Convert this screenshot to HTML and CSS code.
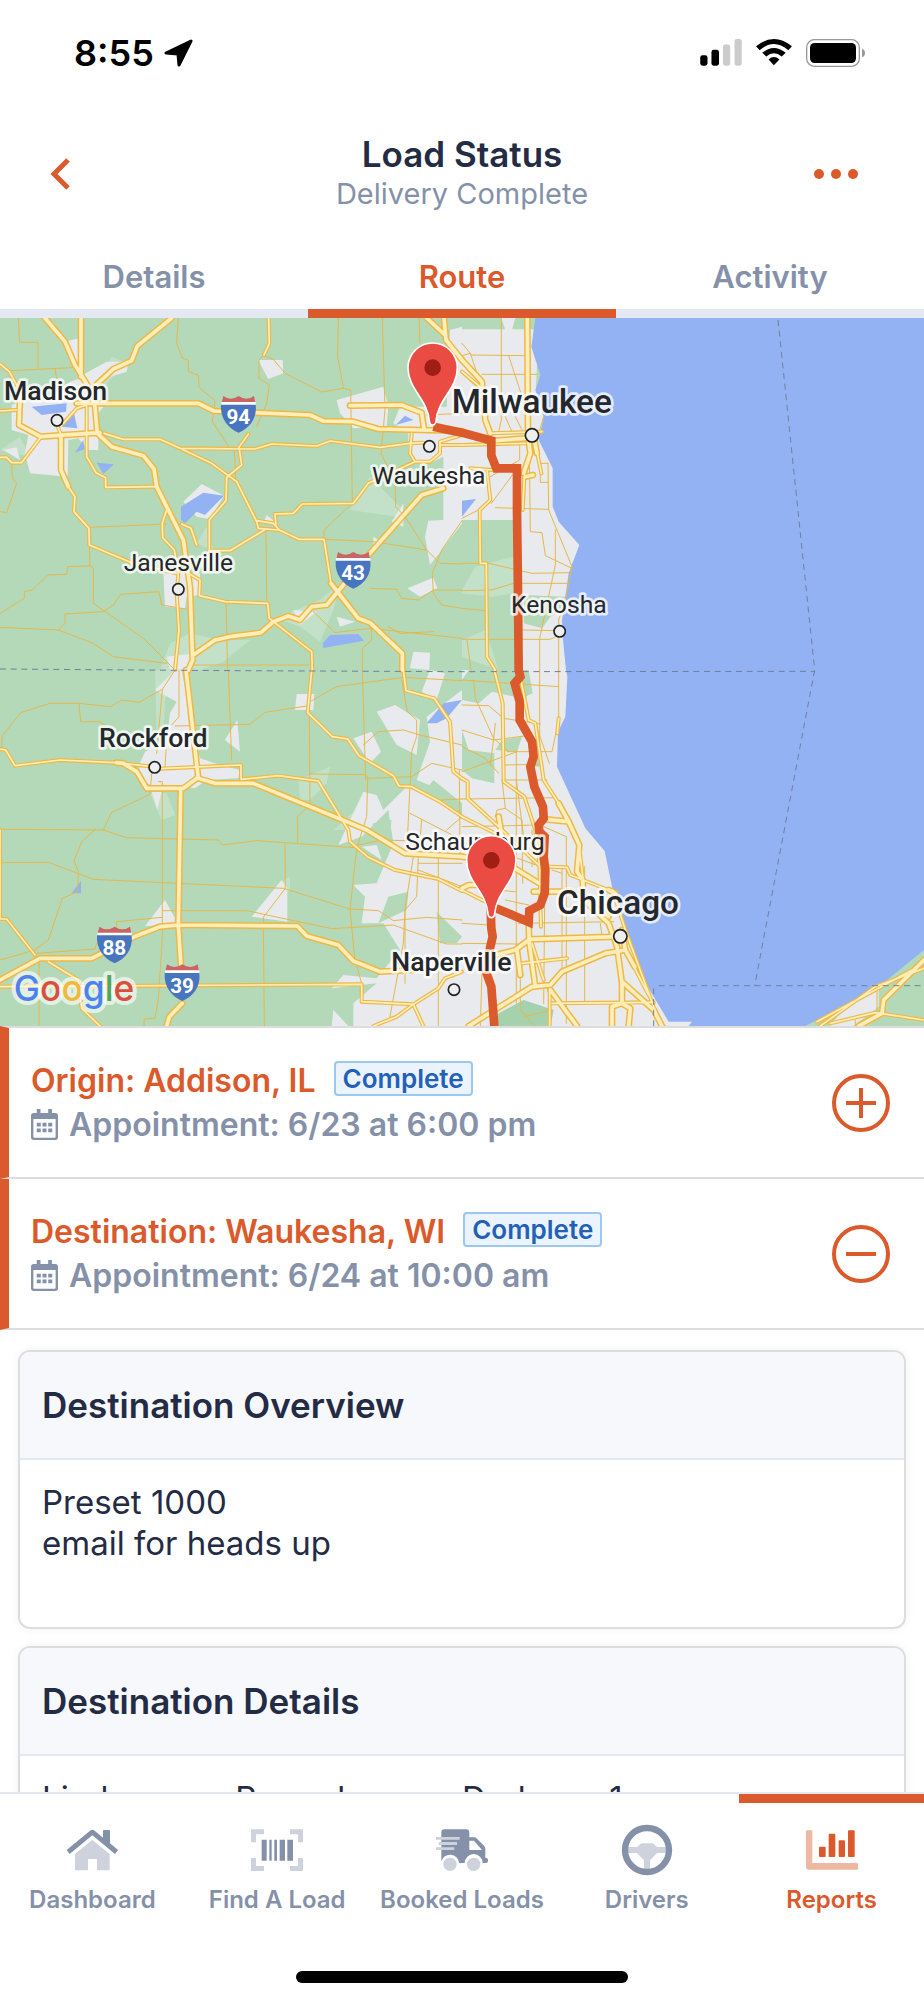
FILE: index.html
```html
<!DOCTYPE html>
<html lang="en">

<head>
    <meta charset="UTF-8">
    <meta name="viewport" content="width=device-width, initial-scale=1.0">
    <title>Load Status</title>
    <link rel="stylesheet" href="styles.css">
</head>

<body>
    <div class="app">
        <div class="status-bar">
            <div class="status-left">
                <span class="time">8:55</span>
                <svg class="arrow" viewBox="0 0 29 28" width="29" height="28"><path d="M27 2 L2 14 L14 15 L15 26Z" fill="#000" stroke="#000" stroke-width="3" stroke-linejoin="round"/></svg>
            </div>
            <div class="status-right">
                <svg viewBox="0 0 126 82" width="42" height="27">
                    <rect x="0" y="49" width="22" height="32" rx="7"/>
                    <rect x="34" y="33" width="23" height="48" rx="7"/>
                    <rect x="69" y="17" width="22" height="64" rx="7" fill="#ccc"/>
                    <rect x="104" y="0" width="22" height="81" rx="7" fill="#ccc"/>
                </svg>
                <svg viewBox="0 0 109 82" width="36" height="27">
                    <path d="M0 22 Q54 -22 109 22 L98 34 Q54 -4 11 34Z"/>
                    <path d="M19 42 Q54 13 90 42 L78 53 Q54 34 31 53Z"/>
                    <path d="M38 62 Q54 48 71 62 L54 80Z"/>
                </svg>
                <svg viewBox="0 0 177 84" width="59" height="28">
                    <rect x="2" y="2" width="158" height="80" rx="23" fill="none" stroke="#999" stroke-width="4"/>
                    <rect x="12" y="12" width="138" height="60" rx="14"/>
                    <path d="M168 29 Q177 32 177 42 Q177 52 168 55Z" fill="#999"/>
                </svg>
            </div>
        </div>

        <header class="header">
            <button class="icon-btn" aria-label="Back">
                <svg viewBox="0 0 20 34" width="20" height="34"><path d="M18 3 L4 17 L18 31" fill="none" stroke="#db5a2b" stroke-width="5"/></svg>
            </button>
            <div class="titles">
                <h1>Load Status</h1>
                <p>Delivery Complete</p>
            </div>
            <button class="icon-btn" aria-label="More">
                <svg viewBox="0 0 45 12" width="45" height="12" fill="#db5a2b"><circle cx="5" cy="6" r="5"/><circle cx="22" cy="6" r="5"/><circle cx="39" cy="6" r="5"/></svg>
            </button>
        </header>

        <nav class="tabs">
            <a href="#details">Details</a>
            <a href="#route" class="active">Route</a>
            <a href="#activity">Activity</a>
        </nav>

        <main class="content">
            <svg class="map" viewBox="0 24 2772 2124" role="img" aria-label="Route map">
                <defs>
                    <g id="roads">
                        <path d="M0 162 28 185 50 225M0 303 50 300M0 442 20 442 35 458 65 458 120 385M312 370 370 388 480 388 540 415 765 417 815 402 950 408 990 393 1140 412 1230 400 1270 398M540 415 635 460 710 515 770 635 775 655 835 660M770 632 820 640 838 660 897 688 972 688 993 820M628 722 690 722 793 660M628 722 628 630 678 572 680 502 725 465 717 412 745 372M828 650 825 612 880 610 907 582 1060 580 1105 520 1245 455M260 290 260 440 288 488 317 503 317 532 470 530M205 530 225 560 222 605 267 655 268 705 395 758 530 790M500 600 487 640 488 683 523 720 535 790 530 850 537 960 525 1080M545 642 573 655 590 705M565 790 600 810 598 857 675 875 803 880 808 925 935 1025 937 1080M806 24 808 100 792 135M1235 370 1230 430 1245 455 1290 455 1320 430 1320 395 1386 375M1320 405 1386 405M170 340 185 380M190 340 230 295 260 285"/>
                        <path transform="translate(1386 0)" d="M0 185 60 235M80 370 240 365M0 405 190 400M75 480 85 570 53 600 55 760 73 760 75 1040 100 1080M90 480 25 475M220 400 238 490M182 600 187 500"/>
                        <path transform="translate(0 1080)" d="M0 237 17 240 45 287 180 270 345 278 460 290M480 296 723 285 723 328 835 317 955 333 1045 480 1050 515 1105 562 1185 600 1315 627 1386 663M935 0 923 128 997 200 1043 207 1077 257 1180 317 1197 348 1235 350 1320 395 1386 440M1210 0 1218 62 1303 85 1350 155 1360 305 1386 325M0 480 0 747 20 747 105 855M145 875 235 930 245 1015 300 1068M0 950 1085 943 1085 995 1240 1003 1315 955 1335 925 1386 905M1120 1068 1190 1040 1240 1003 1270 1068"/>
                        <path transform="translate(1386 1080)" d="M97 0 122 100 125 335 187 380 220 480 232 580 237 770M175 20 200 150 220 160 245 330 290 400M0 325 17 335 17 385 110 470 235 590M0 440 120 500M180 880 315 865M270 1000 575 997M262 590 315 592 325 615 440 660M490 840 560 975M0 660 90 705M1075 1068 1240 950 1386 895M1065 1055 1350 900M1105 1060 1240 1028 1386 1050M290 145 286 190M263 960 263 1068M210 820 245 930M350 520 365 640M452 660 490 780 575 1010 600 1068"/>
                    </g>
                    <g id="highways">
                        <path d="M135 24 195 95 225 165 262 225M243 24 243 200M515 24 412 108 395 152 340 177 285 228M62 225 57 345 122 380 300 368M230 280 595 280 642 303 930 315 970 333 1060 335 1135 357 1386 363M1050 287 1205 285 1265 308 1272 357M270 240 285 290 292 370 335 410 430 437 462 477 470 530 550 690 570 830 578 1050 565 1080M183 380 183 480 205 530M580 1035 645 990 690 980 783 968 820 935 865 918 900 930 935 890 980 885 1030 825 1110 730 1265 555 1330 535M993 820 1075 925 1110 938 1207 1030 1207 1080M1280 24 1335 75M1332 24 1338 90 1386 150"/>
                        <path transform="translate(1386 0)" d="M196 24 198 380 205 430 185 490M0 150 60 215 70 330 85 370M100 392 190 385M190 500 213 495M218 395 225 430"/>
                        <path transform="translate(0 1080)" d="M558 0 595 325 645 340 760 340 1040 455 1100 480 1215 550 1386 560M350 278 370 280 410 305 440 355 550 355 595 322M542 365 535 765 543 890M547 1000 508 1040 500 1068M0 930 120 865 275 865 410 797 480 770 535 765 892 768 920 798 1015 825 1060 873 1140 905 1240 900"/>
                        <path transform="translate(1386 1080)" d="M290 400 320 455 352 525 345 605 362 630 365 690 440 760 465 830 480 940 480 1000 505 1015 500 1068M480 1000 450 1010 450 1068M480 935 575 1020 600 1068M252 448 320 455M200 770 202 820 220 950M200 808 465 800M20 1068 210 950 265 945 300 905 430 850 490 840 480 780M265 960 345 1068M490 840 518 890M110 440 120 500M150 590 240 645M0 560 60 570M0 655 20 645 60 645M215 665 330 665 360 685 440 740M440 660 460 670M100 855 160 840 200 810M165 840 175 915M1190 1068 1260 1030 1265 990 1386 870"/>
                    </g>
                    <g id="shield">
                        <path d="M670 258 Q692 274 716 258 Q740 274 762 258 L766 278 H665Z" fill="#cb6463"/>
                        <path d="M664 276 H767 V286 H664Z" fill="#fff"/>
                        <path d="M663 284 H767 C772 325 748 355 716 368 C684 355 660 325 663 284Z" fill="#4775c0"/>
                    </g>
                    <g id="pin">
                        <path d="M0 172 C-6 172 -9 168 -10 160 C-16 92 -74 66 -74 0 A74 74 0 0 1 74 0 C74 66 16 92 10 160 C9 168 6 172 0 172Z" fill="#ea4b42" stroke="#fff" stroke-width="5"/>
                        <circle r="25" fill="#9f1e15"/>
                    </g>
                </defs>

                <rect y="24" width="2772" height="2124" fill="#b3d9b9"/>

                <!-- light green -->
                <g fill="#c3e1c9">
                    <path d="M1050 600 1110 500 1200 590 1190 620ZM830 925 960 870 1020 820 1000 900 960 995 900 950ZM480 1080 510 1000 570 970 660 990 750 990 670 1055 600 1080ZM300 240 335 140 380 160ZM0 420 60 380 90 440ZM590 700 620 650 640 720Z"/>
                    <path transform="translate(1386 0)" d="M0 840 40 770 155 740 155 850 90 860 0 850ZM0 990 70 960 110 1080 0 1040Z"/>
                    <path transform="translate(0 1080)" d="M465 0 540 0 495 90 490 200 470 180ZM895 330 990 290 980 340 930 390 900 390ZM450 370 500 370 525 435 485 450ZM1000 480 1090 400 1090 480ZM760 740 840 640 870 620 870 660Z"/>
                </g>

                <!-- urban -->
                <g fill="#e8eaed">
                    <path d="M190 95 238 85 240 200 265 185 320 155 385 155 380 185 330 200 300 225 300 280 310 290 295 310 295 420 265 420 235 385 205 390 203 500 90 490 75 430 85 375 35 360 35 285 60 275 130 270 210 215 240 205ZM10 420 50 412 60 450ZM775 150 848 150 850 190 805 207 790 180ZM550 575 605 522 672 557 630 628 590 620ZM490 790 600 790 600 855 560 860 555 895 495 890ZM1010 270 1150 230 1165 290 1160 350 1060 355 1020 310ZM1350 60 1386 50 1386 640 1330 715 1290 765 1275 680 1285 632 1330 630 1330 440 1300 455 1240 455 1225 420 1225 370 1180 340 1200 290 1340 290ZM1222 835 1300 803 1312 835 1260 860ZM1240 1025 1290 1028 1288 1080 1230 1075ZM880 900 950 905 900 945ZM1010 920 1065 935 1020 950ZM500 1040 590 1030 560 1080 510 1080ZM1175 635 1210 580 1210 650ZM1120 680 1150 700 1120 710ZM790 640 800 615 830 640Z"/>
                    <path transform="translate(1386 0)" d="M0 58 400 58 400 1080 183 1080 160 630 0 630ZM118 24 160 24 150 60 130 60Z"/>
                    <path transform="translate(0 1080)" d="M465 60 520 5 545 0 570 130 600 265 660 285 720 300 715 325 620 330 585 355 540 350 480 355 440 340 415 290 435 245 500 210 510 130 530 95ZM455 365 485 365 472 420ZM675 210 712 150 720 245ZM890 72 943 72 940 120 885 120ZM435 768 495 690 525 745 522 765ZM755 740 845 630 862 655 862 755ZM1130 125 1185 105 1260 150 1250 255 1190 225ZM1060 205 1115 185 1143 245 1110 280ZM1265 65 1290 0 1335 10 1310 90ZM1280 140 1386 60 1386 1068 1060 1068 1060 1000 1130 940 995 955 1030 915 1130 925 1200 840 1150 760 1085 760 1095 680 1060 645 1130 640 1180 520 1165 420 1085 500 1015 525 1090 365 1130 375 1150 420 1220 350 1270 375 1300 350 1250 330 1290 215ZM1000 1020 1045 1068 995 1068ZM1085 530 1130 525 1145 570Z"/>
                    <path transform="translate(1386 1080)" d="M0 0 400 0 700 1068 0 1068Z"/>
                </g>

                <!-- parks over the urban areas -->
                <g fill="#b3d9b9">
                    <path transform="translate(1386 0)" d="M225 160 236 195 222 235ZM185 855 310 860 300 900 265 920 240 955 185 940Z"/>
                    <path transform="translate(0 1080)" d="M1165 680 1225 665 1220 720 1135 760ZM1310 725 1386 800 1370 820 1320 820ZM1120 460 1175 450 1165 510 1100 520ZM1270 370 1300 330 1386 400 1386 440Z"/>
                    <path transform="translate(1386 1080)" d="M0 30 20 0 200 0 212 70 180 85 90 65 50 100 0 90ZM0 180 20 240 97 250 97 340 30 325 0 300ZM100 240 120 210 180 200 165 245ZM215 265 240 265 235 290 215 290Z"/>
                    <path transform="translate(1386 1080)" d="M90 1068 110 1030 185 990 275 1020 265 1068Z" fill="#a5d2ad"/>
                </g>

                <!-- water -->
                <g fill="#93b2f3">
                    <path d="M95 290 200 280 198 305 125 315ZM185 350 222 310 232 355ZM225 428 250 390 253 418ZM290 458 342 463 310 492ZM543 590 610 548 672 557 615 615 590 605 555 640 543 630ZM1187 345 1215 317 1240 330ZM968 1000 990 975 1075 972 1092 992 970 1014ZM1386 572 1428 567 1386 620Z"/>
                    <path transform="translate(0 1080)" d="M1280 160 1330 100 1386 90 1340 145 1310 160ZM215 670 243 632 243 670Z"/>
                    <path d="M1606 24 1594 110 1621 195 1606 240 1631 320 1616 390 1658 475 1658 590 1676 635 1738 705 1706 790 1686 930 1689 990 1698 1080 1702 1100 1696 1220 1674 1265 1671 1370 1756 1555 1814 1623 1838 1740 1876 1860 1946 2035 2006 2135 2076 2135 2066 2148 2416 2148 2536 2085 2651 2018 2772 1920 2772 24Z"/>
                </g>
                <path d="M2490 2148 2540 2085 2636 2028 2636 2090 2560 2148Z" fill="#e8eaed"/>

                <g class="road-thin">
                    <path d="M55 24 59 97 114 97 114 173M30 182 235 172M165 175 175 240M535 24 530 100 548 145 565 150 565 185 595 195 597 232 645 272 637 335 690 415M1015 24 1013 140 1030 235 965 246 855 190 820 148 790 135M1147 24 1155 300 1143 430 1185 515 1187 590 1215 620 1280 720M1257 24 1260 100M792 135 777 150 777 205 808 225 800 280 770 350M1030 235 1052 240 1057 580 972 660 972 688M35 460 37 505 50 520 20 608 0 605M270 652 500 642M268 705 270 768 280 775 280 880 430 985 525 1080M270 768 203 770 200 793 143 795 97 840 73 845 73 865 0 910M0 952 175 960 195 940 195 912 310 905 340 885 362 853 477 845 485 885 557 897M175 960 280 1000 340 1040 500 1060M798 660 800 880M678 880 683 1080M580 1065 935 1065M703 415 707 515M975 688 1120 695 1280 720 1320 760 1386 762M1110 835 1190 838 1205 865 1255 870 1300 840 1386 840M1386 632 1325 720 1297 790 1300 850 1325 885 1386 895M940 905 1005 968 1110 955 1386 985M1115 955 1115 990 1087 1015 1087 1080M1165 950 1200 970 1300 965M1386 310 1280 315"/>
                    <path transform="translate(1386 0)" d="M118 24 118 330 110 365M28 135 190 137M60 193 225 193M140 137 190 290M0 100 25 130 0 137M258 460 260 600 330 770 310 870 290 930 290 1080M202 430 205 665 240 668 250 737 330 775M100 593 260 598M280 660 280 765 233 985 233 1080M0 760 80 760 210 790 320 788M0 842 88 840 155 820 315 820M180 960 290 962M0 988 265 988 290 975M0 895 70 902M88 580 155 490M0 625 55 597M173 390 173 450 85 500M150 365 130 320M180 360 160 320M245 320 230 370M235 460 258 460M235 460 235 517 258 517M15 990 27 1080M25 130 60 235M0 190 75 260M0 310 70 300"/>
                    <path transform="translate(0 1080)" d="M5 235 7 198 62 128 150 100 237 100 332 110 365 90 417 97 487 58 525 0M237 100 242 155 297 155 315 165M525 168 750 163 795 127 920 108M685 0 695 270M1087 0 1097 330M930 95 1010 50 1210 22 1386 32M928 130 930 405 893 440 893 517M930 312 1097 314 1103 325 1235 320 1295 280 1386 300M1103 325 1100 440 1070 535 1050 720 1065 870 1085 940M0 478 310 480 380 503 655 510 667 525 770 512 1065 533M287 478 245 515 222 572 235 605 233 665 187 685 145 810 105 840 0 870M310 480 335 427 450 373 455 310M0 578 145 577 280 628 850 655 1050 717 1135 722 1180 752 1280 742 1386 750M855 522 856 655 790 742 793 1068M475 335 487 335 487 800 475 990 465 1045 432 1047 432 1068M350 790 350 755 487 742M490 722 740 722 995 776 1180 765 1340 822 1386 822M110 850 285 837 290 820M117 870 117 1068M1230 430 1386 510M1205 30 1222 125 1250 150 1250 200 1235 245 1222 510M1090 225 1135 185 1210 180 1260 195 1386 225M1315 560 1315 1068M1255 580 1386 580M1240 560 1215 715 1210 820 1170 1040M1255 560 1250 680 1215 720 1215 940M1255 600 1386 650M500 210 495 290M537 0 537 140 515 165M487 60 470 250M1075 525 1145 510 1220 512M1320 390 1386 387M1265 450 1260 510M1340 480 1386 440M1380 560 1378 300"/>
                    <path transform="translate(1386 1080)" d="M233 0 233 240M290 0 290 140M163 240 163 1000M35 30 40 85 95 205 85 285M0 105 80 107 125 145 235 162M0 180 95 210 210 195M0 230 70 265 110 310M0 305 165 245M120 330 255 330M0 387 280 383M0 470 235 465M130 285 235 283M100 440 105 420 130 415 180 450 182 640M313 500 313 1060M368 590 368 1000M170 760 455 755M0 760 80 765M0 820 170 822M245 470 313 500M60 900 55 1068M135 245 270 245 290 150M0 30 290 50M100 160 95 205 140 245M220 160 262 280M120 330 130 415M163 330 185 500M210 480 210 590M100 660 160 665M130 690 200 705M175 920 175 1020 220 1068M185 1040 270 1020M245 1000 250 500M265 945 300 900 300 590M415 760 420 800M1245 955 1245 1030M1180 1050 1180 1068M270 600 300 610M100 540 235 590M110 570 235 640"/>
                </g>
                <use href="#roads" class="road-case"/>
                <use href="#highways" class="highway-case"/>
                <use href="#roads" class="road-fill"/>
                <use href="#highways" class="highway-fill"/>

                <path class="border-line" d="M0 1077 700 1082 1386 1085 2444 1084M2334 30 2444 1080 2264 2027M1976 2027 2772 2027M1961 2035 1961 2148"/>

                <path class="route" d="M1300 350 1386 368 1474 392 1474 437 1489 475 1551 475 1551 600 1554 850 1556 1080 1561 1100 1544 1120 1559 1175 1559 1230 1596 1295 1601 1340 1591 1370 1603 1430 1629 1490 1631 1525 1616 1545 1618 1565 1634 1580 1631 1640 1636 1680 1634 1750 1621 1785 1588 1802 1586 1836 1530 1812 1488 1795 1472 1795 1474 1855 1478 1880 1471 1910 1458 1985 1474 2030 1483 2148"/>

                <g>
                    <use href="#shield"/>
                    <use href="#shield" x="344" y="468"/>
                    <use href="#shield" x="-372" y="1592"/>
                    <use href="#shield" x="-169" y="1705"/>
                </g>
                <g class="shield-text">
                    <text x="715" y="342">94</text>
                    <text x="1059" y="810">43</text>
                    <text x="343" y="1935">88</text>
                    <text x="546" y="2048">39</text>
                </g>

                <g class="dot">
                    <circle cx="171" cy="331" r="17"/>
                    <circle cx="1288" cy="409" r="17"/>
                    <circle cx="535" cy="838" r="17"/>
                    <circle cx="1596" cy="376" r="20"/>
                    <circle cx="1679" cy="964" r="17"/>
                    <circle cx="464" cy="1372" r="17"/>
                    <circle cx="1362" cy="2039" r="17"/>
                    <circle cx="1861" cy="1879" r="20"/>
                </g>

                <g class="place">
                    <text class="mid" x="12" y="271">Madison</text>
                    <text class="big" x="1355" y="308">Milwaukee</text>
                    <text x="1116" y="522">Waukesha</text>
                    <text x="371" y="782">Janesville</text>
                    <text x="1533" y="908">Kenosha</text>
                    <text class="mid" x="297" y="1312">Rockford</text>
                    <text x="1216" y="1621">Schaumburg</text>
                    <text class="big" x="1671" y="1811">Chicago</text>
                    <text class="mid" x="1174" y="1982">Naperville</text>
                </g>

                <text class="google" x="41" y="2072"><tspan fill="#4c82ee">G</tspan><tspan fill="#d94f3f">o</tspan><tspan fill="#f0b93a">o</tspan><tspan fill="#4c82ee">g</tspan><tspan fill="#55a45a">l</tspan><tspan fill="#d94f3f">e</tspan></text>

                <use href="#pin" x="1298" y="173"/>
                <use href="#pin" x="1474" y="1651"/>
            </svg>

            <section class="stop">
                <div class="stop-info">
                    <h2>Origin: Addison, IL <span class="badge">Complete</span></h2>
                    <p>
                        <svg viewBox="0 0 80 92" width="27" height="31" fill="#8591a9"><path d="M17 0h11v14H17zM51 0h11v14H51z"/><path d="M8 12h64q8 0 8 8v64q0 8-8 8H8q-8 0-8-8V20q0-8 8-8zM7 30v52q0 3 3 3h60q3 0 3-3V30z" fill-rule="evenodd"/><path d="M17 41h12v11H17zM34 41h12v11H34zM51 41h12v11H51zM17 58h12v11H17zM34 58h12v11H34zM51 58h12v11H51z"/></svg>
                        Appointment: 6/23 at 6:00 pm
                    </p>
                </div>
                <button class="icon-btn" aria-label="Expand origin">
                    <svg viewBox="0 0 60 60" width="60" height="60" fill="none" stroke="#db5a2b" stroke-width="4"><circle cx="30" cy="30" r="27"/><path d="M15 30h30M30 15v30"/></svg>
                </button>
            </section>
            <section class="stop">
                <div class="stop-info">
                    <h2>Destination: Waukesha, WI <span class="badge">Complete</span></h2>
                    <p>
                        <svg viewBox="0 0 80 92" width="27" height="31" fill="#8591a9"><path d="M17 0h11v14H17zM51 0h11v14H51z"/><path d="M8 12h64q8 0 8 8v64q0 8-8 8H8q-8 0-8-8V20q0-8 8-8zM7 30v52q0 3 3 3h60q3 0 3-3V30z" fill-rule="evenodd"/><path d="M17 41h12v11H17zM34 41h12v11H34zM51 41h12v11H51zM17 58h12v11H17zM34 58h12v11H34zM51 58h12v11H51z"/></svg>
                        Appointment: 6/24 at 10:00 am
                    </p>
                </div>
                <button class="icon-btn" aria-label="Collapse destination">
                    <svg viewBox="0 0 60 60" width="60" height="60" fill="none" stroke="#db5a2b" stroke-width="4"><circle cx="30" cy="30" r="27"/><path d="M15 30h30"/></svg>
                </button>
            </section>

            <div class="cards">
                <section class="card">
                    <h3>Destination Overview</h3>
                    <p class="card-body">Preset 1000<br>email for heads up</p>
                </section>
                <section class="card">
                    <h3>Destination Details</h3>
                    <div class="card-body columns">
                        <span>Linden</span>
                        <span>Renard</span>
                        <span>Dodsons 1</span>
                    </div>
                </section>
            </div>
        </main>

        <footer class="bottom">
            <nav class="bottom-nav">
                <a href="#dashboard">
                    <svg viewBox="0 0 156 156" width="52" height="52">
                        <path class="tone-1" d="M2 78 L72 20 Q79 15 86 20 L111 41 V21 q0-3 3-3 h15 q3 0 3 3 V58 L156 78 L147 90 L79 34 L11 90Z"/>
                        <path class="tone-2" d="M79 48 L131 90 V136 q0 3-3 3 H93 V105 H66 V139 H30 q-3 0-3-3 V90Z"/>
                    </svg>
                    Dashboard
                </a>
                <a href="#find">
                    <svg viewBox="0 0 156 156" width="52" height="52">
                        <path class="tone-2" d="M0 16h39v15H15v24H0zM156 16h-39v15h24v24h15zM0 141h39v-15H15v-24H0zM156 141h-39v-15h24v-24h15z"/>
                        <path class="tone-1" d="M32 47h15v63H32zM55 47h7v63h-7zM70 47h8v63h-8zM86 47h16v63H86zM109 47h17v63h-17z"/>
                    </svg>
                    Find A Load
                </a>
                <a href="#booked">
                    <svg viewBox="0 0 156 156" width="52" height="52">
                        <path class="tone-1" d="M25 16 H90 q10 0 10 10 V40 H114 q5 0 9 4 L144 65 q4 4 4 10 V101 q8 0 8 6 v4 q0 6-6 6 H140 A27 27 0 0 0 86 117 H69 A27 27 0 0 0 16 112 V26 q0-10 9-10Z M100 50 V78 H138 L114 50Z" fill-rule="evenodd"/>
                        <path class="tone-2" d="M0 39h71v8H0zM8 54h55v9H8zM0 70h55v8H0z"/>
                        <circle class="tone-2" cx="42" cy="121" r="20"/>
                        <circle class="tone-2" cx="113" cy="121" r="20"/>
                    </svg>
                    Booked Loads
                </a>
                <a href="#drivers">
                    <svg viewBox="0 0 156 156" width="52" height="52">
                        <path class="tone-2" d="M20 69 H48 L58 60 q3-2 6-2 H92 q3 0 6 2 L108 69 H136 V87 H108 L90 106 q-3 3-3 7 V138 H69 V113 q0-4-3-7 L48 87 H20Z"/>
                        <circle class="ring" cx="78" cy="78" r="66"/>
                    </svg>
                    Drivers
                </a>
                <a href="#reports" class="active">
                    <svg viewBox="0 0 156 156" width="52" height="52">
                        <path class="tone-2" d="M3 19h13q3 0 3 3v95h134q3 0 3 3v14q0 3-3 3H8q-8 0-8-8V22q0-3 3-3z"/>
                        <g class="tone-1"><rect x="39" y="68" width="20" height="31" rx="3"/><rect x="68" y="29" width="20" height="70" rx="3"/><rect x="98" y="49" width="19" height="50" rx="3"/><rect x="126" y="19" width="20" height="80" rx="3"/></g>
                    </svg>
                    Reports
                </a>
            </nav>
            <div class="home-bar"></div>
        </footer>
    </div>
</body>

</html>
```
FILE: styles.css
```css
* {
    box-sizing: border-box;
}

body,
h1,
h2,
h3,
p {
    margin: 0;
}

body {
    font-family: Inter, "Liberation Sans", sans-serif;
    color: #232b45;
    background-color: #fff;
}

a {
    text-decoration: none;
}

svg {
    display: block;
    flex: none;
}

.app {
    display: flex;
    flex-direction: column;
    height: 100vh;
    overflow: hidden;
}

.icon-btn {
    padding: 0;
    border: none;
    background: none;
    cursor: pointer;
}

/* status bar */
.status-bar {
    display: flex;
    justify-content: space-between;
    align-items: center;
    height: 105px;
    padding: 0 59px 0 74px;
    flex: none;
}

.status-left {
    display: flex;
    align-items: center;
    gap: 10px;
    color: #000;
}

.time {
    font-size: 36px;
    font-weight: 600;
}

.status-right {
    display: flex;
    align-items: center;
    gap: 14px;
}

/* header */
.header {
    display: grid;
    grid-template-columns: 1fr auto 1fr;
    align-items: center;
    height: 137px;
    padding: 0 65px 0 50px;
    flex: none;
}

.header .icon-btn {
    justify-self: start;
}

.header .icon-btn:last-child {
    justify-self: end;
}

.titles {
    padding-left: 15px;
    text-align: center;
}

.titles h1 {
    font-size: 35px;
    font-weight: 600;
    line-height: 40px;
}

.titles p {
    font-size: 29px;
    line-height: 40px;
    color: #8591a9;
}

.tabs {
    display: flex;
    flex: none;
}

.tabs a {
    flex: 1;
    padding-top: 3px;
    border-bottom: 9px solid #e3e8f2;
    font-size: 31px;
    font-weight: 600;
    line-height: 64px;
    text-align: center;
    color: #8591a9;
}

.tabs .active {
    color: #db5a2b;
    border-color: #db5a2b;
}

.content {
    flex: 1;
    min-height: 0;
    overflow-y: auto;
    scrollbar-width: none;
}

/* map */
.map {
    width: 100%;
    height: auto;
}

.road-thin,
.road-case,
.road-fill,
.highway-case,
.highway-fill {
    fill: none;
    stroke-linejoin: round;
    stroke-linecap: round;
}

.road-thin {
    stroke: #e5b84c;
    stroke-width: 3;
}

.road-case {
    stroke: #edb945;
    stroke-width: 12;
}

.road-fill {
    stroke: #ffeeba;
    stroke-width: 5;
}

.highway-case {
    stroke: #edb945;
    stroke-width: 20;
}

.highway-fill {
    stroke: #ffeeba;
    stroke-width: 11;
}

.border-line {
    fill: none;
    stroke: #71809c;
    stroke-width: 3;
    stroke-dasharray: 18 14;
}

.route {
    fill: none;
    stroke: #db5a2b;
    stroke-width: 26;
}

.dot {
    fill: #eee;
    stroke: #1f2226;
    stroke-width: 5;
}

.place {
    font-family: Roboto, sans-serif;
    font-size: 74px;
    fill: #24272b;
    stroke: rgba(255, 255, 255, .75);
    stroke-width: 16px;
    stroke-linejoin: round;
    paint-order: stroke;
}

.place .mid {
    font-size: 80px;
    font-weight: 500;
}

.place .big {
    font-size: 100px;
    font-weight: 500;
}

.shield-text {
    font-family: Roboto, sans-serif;
    font-size: 62px;
    font-weight: 700;
    text-anchor: middle;
    fill: #fff;
}

.google {
    font-size: 106px;
    font-weight: 500;
    stroke: rgba(255, 255, 255, .65);
    stroke-width: 24px;
    stroke-linejoin: round;
    paint-order: stroke;
}

/* stops */
.stop {
    display: flex;
    justify-content: space-between;
    align-items: center;
    height: 151px;
    padding: 0 33px 0 22px;
    border-left: 9px solid #db5a2b;
    border-bottom: 2px solid #ddd;
}

.map + .stop {
    height: 153px;
    border-top: 2px solid #ddd;
}

.stop h2,
.stop p {
    display: flex;
    align-items: center;
    font-size: 32px;
    font-weight: 600;
    line-height: 44px;
}

.stop h2 {
    gap: 18px;
    color: #db5a2b;
}

.stop p {
    gap: 11px;
    color: #8591a9;
}

.badge {
    margin-bottom: 4px;
    padding: 0 7px;
    border: 2px solid #9cc7ef;
    border-radius: 4px;
    background-color: #ebf4fc;
    color: #2360b8;
    font-size: 26px;
    font-weight: 600;
    line-height: 31px;
}

/* cards */
.cards {
    display: flex;
    flex-direction: column;
    gap: 17px;
    padding: 20px 18px;
}

.card {
    border: 2px solid #ddd;
    border-radius: 12px;
    box-shadow: 0 0 10px rgba(0, 0, 0, .06);
    overflow: hidden;
}

.card h3 {
    padding: 0 22px;
    border-bottom: 2px solid #e3e8f2;
    background-color: #f7f8fc;
    font-size: 35px;
    font-weight: 600;
    line-height: 106px;
}

.card-body {
    padding: 22px 22px 63px;
    font-size: 33px;
    line-height: 41px;
}

.columns {
    display: grid;
    grid-template-columns: 23% 27% 1fr;
}

/* bottom bar */
.bottom {
    flex: none;
    border-top: 2px solid #e3e8f2;
    background-color: #fff;
}

.bottom-nav {
    display: flex;
}

.bottom-nav a {
    flex: 1 1 0;
    display: flex;
    flex-direction: column;
    align-items: center;
    gap: 8px;
    padding-top: 21px;
    border-top: 9px solid transparent;
    color: #8591a9;
    font-size: 24px;
    font-weight: 600;
    line-height: 32px;
    white-space: nowrap;
}

.bottom-nav .active {
    color: #db5a2b;
    border-color: #db5a2b;
}

.tone-1 {
    fill: currentColor;
}

.tone-2 {
    fill: #ced2dc;
}

.active .tone-2 {
    fill: #eeb8a2;
}

.ring {
    fill: none;
    stroke: currentColor;
    stroke-width: 19;
}

.home-bar {
    width: 36%;
    height: 12px;
    margin: 55px auto 17px;
    border-radius: 6px;
    background-color: #000;
}
```
